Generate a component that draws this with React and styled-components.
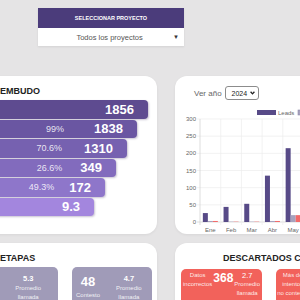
import styled, { createGlobalStyle } from 'styled-components';

const GlobalStyle = createGlobalStyle`
  html, body {
    margin: 0;
    padding: 0;
  }
  body {
    background: #e5e4e5;
    font-family: 'Liberation Sans', Arial, sans-serif;
    overflow: hidden;
  }
`;

const Page = styled.div`
  width: 300px;
  height: 300px;
  overflow: hidden;
  padding-top: 8px;
  box-sizing: border-box;
`;

const ProjectPicker = styled.div`
  width: 146px;
  margin-left: 38px;
  background: #fff;
  box-shadow: 0 1px 2px rgba(0, 0, 0, 0.08);
`;

const PickerHeader = styled.div`
  height: 20px;
  background: #4b3c7b;
  color: #fff;
  font-size: 5.5px;
  font-weight: 700;
  display: flex;
  align-items: center;
  justify-content: center;
`;

const PickerSelect = styled.div`
  height: 18px;
  display: grid;
  grid-template-columns: 1fr auto;
  align-items: center;
  padding: 0 5px 0 8px;
  font-size: 7.5px;
  color: #555;
  text-align: center;
`;

const Caret = styled.span`
  font-size: 6px;
  color: #333;
`;

const Dashboard = styled.div`
  display: grid;
  grid-template-columns: 197px 300px;
  grid-template-rows: 158px 80px;
  column-gap: 18px;
  row-gap: 9px;
  margin-left: -40px;
  margin-top: 30px;
`;

const Card = styled.section`
  background: #fff;
  border-radius: 12px;
  box-shadow: 0 1px 3px rgba(0, 0, 0, 0.06);
  padding: ${p => p.$pad || '9px 9px 0 18px'};
  overflow: hidden;
  box-sizing: border-box;
`;

const CardTitle = styled.h2`
  margin: 0 0 3px;
  padding-left: ${p => p.$indent}px;
  font-size: 9px;
  line-height: 12px;
  font-weight: 700;
  color: #222;
  white-space: nowrap;
`;

const Funnel = styled.div`
  display: flex;
  flex-direction: column;
  gap: 1px;
`;

const FunnelBar = styled.div`
  height: 18.5px;
  box-sizing: border-box;
  background: ${p => p.$color};
  border-radius: 4px;
  box-shadow: 1px 1px 2px rgba(40, 20, 80, 0.25);
  display: flex;
  justify-content: flex-end;
  align-items: center;
  gap: ${p => p.$gap}px;
  padding-right: 14px;
  color: #fff;
`;

const BarPct = styled.span`
  font-size: 9px;
  color: rgba(255, 255, 255, 0.85);
`;

const BarValue = styled.span`
  font-size: 13px;
  font-weight: 700;
`;

const ChartToolbar = styled.div`
  display: flex;
  align-items: center;
  gap: 3px;
  height: 14px;
  padding-left: 19px;
`;

const YearLabel = styled.span`
  font-size: 8px;
  color: #666;
`;

const YearSelect = styled.div`
  width: 34px;
  height: 14px;
  box-sizing: border-box;
  border: 1px solid #8c8c8c;
  border-radius: 3px;
  display: flex;
  align-items: center;
  justify-content: space-between;
  padding: 0 3px 0 6px;
  font-size: 7px;
  color: #222;
`;

const ChartSvg = styled.svg`
  display: block;
  margin-top: 4px;
`;

const BoxRow = styled.div`
  display: flex;
  gap: 14px;
  padding-top: ${p => p.$top || 0}px;
`;

const StageBox = styled.div`
  width: 80px;
  height: 70px;
  flex: none;
  box-sizing: border-box;
  background: #a09bb8;
  border-radius: 5px;
  padding: 6px 0 0 4px;
  display: flex;
  gap: 16px;
  color: #fff;
`;

const Col = styled.div`
  display: flex;
  flex-direction: column;
  align-items: center;
  text-align: center;
  white-space: nowrap;
`;

const BigNumber = styled.span`
  font-size: ${p => p.$size || 13}px;
  line-height: ${p => p.$lh || 18}px;
  font-weight: 700;
`;

const SmallNumber = styled.span`
  font-size: 7.5px;
  line-height: ${p => p.$lh || 11}px;
  font-weight: ${p => p.$weight || 700};
`;

const Caption = styled.span`
  font-size: 6px;
  line-height: 9px;
  color: rgba(255, 255, 255, 0.88);
`;

const DiscardBox = styled.div`
  width: 81px;
  height: 70px;
  flex: none;
  box-sizing: border-box;
  background: #f2625b;
  border-radius: 5px;
  padding-top: 2px;
  display: flex;
  justify-content: center;
  align-items: flex-start;
  gap: 1px;
  color: #fff;
`;

const funnel = [
  { value: '1856', width: 170, color: '#5e4b90', gap: 0 },
  { value: '1838', pct: '99%', width: 159, color: '#6a56a2', gap: 30 },
  { value: '1310', pct: '70.6%', width: 149, color: '#7661b0', gap: 22 },
  { value: '349', pct: '26.6%', width: 138, color: '#826bbd', gap: 18 },
  { value: '172', pct: '49.3%', width: 127, color: '#8e76ca', gap: 15 },
  { value: '9.3', width: 116, color: '#a386de', gap: 0 },
];

const months = ['Ene', 'Feb', 'Mar', 'Abr', 'May', 'Jun', 'Jul', 'Ago', 'Sep', 'Oct', 'Nov', 'Dic'];
const series = [
  { name: 'Leads', color: '#574a87', data: [26, 44, 53, 135, 215, 182, 150, 118, 96, 80, 64, 40] },
  { name: 'Contactados', color: '#a6a2be', data: [3, 1, 1, 3, 20, 16, 12, 10, 8, 6, 5, 3] },
  { name: 'Descartados', color: '#f26b6b', data: [3, 1, 1, 3, 20, 14, 11, 9, 7, 6, 4, 2] },
];

const plot = { left: 25, top: 15, bottom: 118, cat: 20.7 };
const yPx = v => plot.bottom - (v * (plot.bottom - plot.top)) / 300;

const LeadsChart = () => {
  const right = plot.left + plot.cat * months.length;
  const ticks = [0, 50, 100, 150, 200, 250, 300];
  return (
    <ChartSvg width="300" height="130" viewBox="0 0 300 130">
      {/* legend */}
      {series.map((s, i) => (
        <g key={s.name} transform={`translate(${82 + i * 41} 0)`}>
          <rect x="0" y="6" width="19" height="5" fill={s.color} stroke={i ? '#8f8ba8' : 'none'} strokeWidth="0.6" />
          <text x="21" y="10.5" fontSize="6" fill="#666">{s.name}</text>
        </g>
      ))}
      {/* grid */}
      {ticks.map(t => (
        <g key={t}>
          <line x1={plot.left - 3} x2={right} y1={yPx(t)} y2={yPx(t)} stroke={t ? '#ececec' : '#cfcfcf'} strokeWidth="0.7" />
          <text x="21" y={yPx(t) + 2} fontSize="6" fill="#666" textAnchor="end">{t}</text>
        </g>
      ))}
      {months.map((m, i) => (
        <line key={m} x1={plot.left + i * plot.cat} x2={plot.left + i * plot.cat} y1={plot.top} y2={plot.bottom + 3}
          stroke={i ? '#ececec' : '#cfcfcf'} strokeWidth="0.7" />
      ))}
      <line x1={right} x2={right} y1={plot.top} y2={plot.bottom + 3} stroke="#ececec" strokeWidth="0.7" />
      {/* bars */}
      {months.map((m, i) => (
        <g key={m}>
          {series.map((s, j) => (
            <rect key={s.name} x={plot.left + i * plot.cat + 2.85 + j * 5} y={yPx(s.data[i])} width="5"
              height={plot.bottom - yPx(s.data[i])} fill={s.color} />
          ))}
          <text x={plot.left + i * plot.cat + plot.cat / 2} y="128" fontSize="6" fill="#666" textAnchor="middle">{m}</text>
        </g>
      ))}
    </ChartSvg>
  );
};

const Chevron = () => (
  <svg width="5" height="4" viewBox="0 0 5 4">
    <path d="M0.6 0.8 L2.5 2.9 L4.4 0.8" fill="none" stroke="#222" strokeWidth="1.3" />
  </svg>
);

export default function App() {
  return (
    <>
      <GlobalStyle />
      <Page>
        <ProjectPicker>
          <PickerHeader>SELECCIONAR PROYECTO</PickerHeader>
          <PickerSelect>
            <span>Todos los proyectos</span>
            <Caret>▼</Caret>
          </PickerSelect>
        </ProjectPicker>

        <Dashboard>
          <Card>
            <CardTitle $indent={22}>EMBUDO</CardTitle>
            <Funnel>
              {funnel.map(b => (
                <FunnelBar key={b.value} $color={b.color} $gap={b.gap} style={{ width: b.width }}>
                  {b.pct && <BarPct>{b.pct}</BarPct>}
                  <BarValue>{b.value}</BarValue>
                </FunnelBar>
              ))}
            </Funnel>
          </Card>

          <Card $pad="10px 0 0 0">
            <ChartToolbar>
              <YearLabel>Ver año</YearLabel>
              <YearSelect>
                <span>2024</span>
                <Chevron />
              </YearSelect>
            </ChartToolbar>
            <LeadsChart />
          </Card>

          <Card>
            <CardTitle $indent={22}>ETAPAS</CardTitle>
            <BoxRow>
              <StageBox>
                <Col>
                  <BigNumber>52</BigNumber>
                  <Caption>Nuevo</Caption>
                </Col>
                <Col>
                  <SmallNumber>5.3</SmallNumber>
                  <Caption>Promedio</Caption>
                  <Caption>llamada</Caption>
                </Col>
              </StageBox>
              <StageBox>
                <Col>
                  <BigNumber>48</BigNumber>
                  <Caption>Contesto</Caption>
                </Col>
                <Col>
                  <SmallNumber>4.7</SmallNumber>
                  <Caption>Promedio</Caption>
                  <Caption>llamada</Caption>
                </Col>
              </StageBox>
            </BoxRow>
          </Card>

          <Card $pad="9px 0 0 6px">
            <CardTitle $indent={42}>DESCARTADOS CONTACTO FALLIDO</CardTitle>
            <BoxRow $top={2}>
              <DiscardBox>
                <Col>
                  <Caption>Datos</Caption>
                  <Caption>incorrectos</Caption>
                </Col>
                <Col>
                  <BigNumber $size={12} $lh={14}>368</BigNumber>
                </Col>
                <Col>
                  <SmallNumber $lh={9} $weight={400}>2.7</SmallNumber>
                  <Caption>Promedio</Caption>
                  <Caption>llamada</Caption>
                </Col>
              </DiscardBox>
              <DiscardBox>
                <Col>
                  <Caption>Más de</Caption>
                  <Caption>intentos</Caption>
                  <Caption>no contesto</Caption>
                </Col>
                <Col>
                  <BigNumber $size={12} $lh={14}>214</BigNumber>
                </Col>
                <Col>
                  <SmallNumber $lh={9} $weight={400}>6.1</SmallNumber>
                  <Caption>Promedio</Caption>
                  <Caption>llamada</Caption>
                </Col>
              </DiscardBox>
            </BoxRow>
          </Card>
        </Dashboard>
      </Page>
    </>
  );
}
